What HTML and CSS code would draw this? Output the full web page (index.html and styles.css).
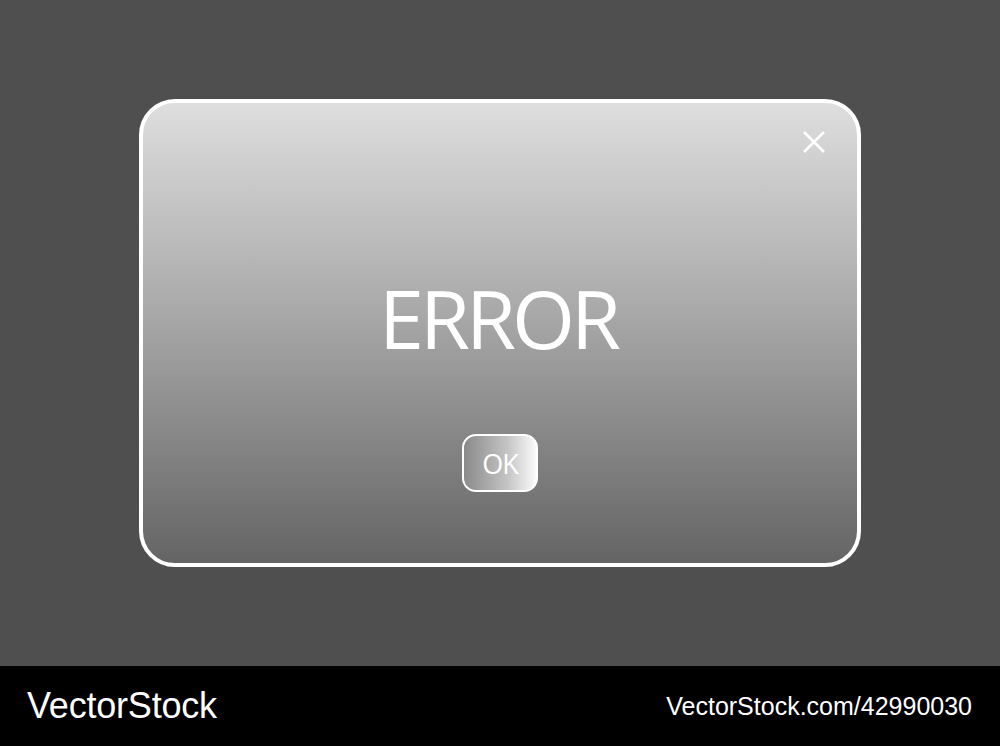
FILE: index.html
```html
<!DOCTYPE html>
<html lang="en">
<head>
    <meta charset="UTF-8">
    <meta name="viewport" content="width=device-width, initial-scale=1.0">
    <title>Error</title>
    <link rel="stylesheet" href="styles.css">
</head>
<body>
    <main class="stage">
        <div class="dialog">
            <button class="close" aria-label="Close">
                <svg width="24" height="24" viewBox="0 0 24 24">
                    <path d="M2 2 L22 22 M22 2 L2 22" stroke="#fff" stroke-width="2.6" fill="none"/>
                </svg>
            </button>
            <h1 class="title">ERROR</h1>
            <button class="ok">OK</button>
        </div>
    </main>

    <footer class="bar">
        <span class="brand">VectorStock</span>
        <span class="ref">VectorStock.com/42990030</span>
    </footer>
</body>
</html>
```

FILE: styles.css
```css
body {
    margin: 0;
    background: #4f4f4f;
}

.stage {
    height: 666px;
    display: flex;
    align-items: center;
    justify-content: center;
}

.dialog {
    position: relative;
    box-sizing: border-box;
    width: 722px;
    height: 468px;
    border: 4px solid #fff;
    border-radius: 36px;
    background: linear-gradient(180deg, #dedede 0%, #a9a9a9 45%, #646464 100%);
    display: flex;
    flex-direction: column;
    align-items: center;
    padding-top: 174px;
}

.close {
    position: absolute;
    top: 27px;
    right: 31px;
    padding: 0;
    border: none;
    background: none;
    cursor: pointer;
    line-height: 0;
}

.title {
    margin: 0;
    font-family: 'Open Sans', sans-serif;
    font-weight: 400;
    font-size: 81px;
    line-height: 82px;
    color: #fff;
    letter-spacing: -4px;
    text-indent: -4px;
}

.ok {
    margin-top: 75px;
    box-sizing: border-box;
    width: 76px;
    height: 58px;
    border: 2px solid #fff;
    border-radius: 14px;
    background: linear-gradient(90deg, #8a8a8a 0%, #c4c4c4 60%, #fafafa 100%);
    color: #fff;
    font-family: 'Open Sans', sans-serif;
    font-size: 27px;
    letter-spacing: -1px;
    padding: 0;
    cursor: pointer;
}

.bar {
    height: 80px;
    background: #000;
    color: #fff;
    font-family: 'Liberation Sans', Arial, sans-serif;
    display: flex;
    align-items: center;
    justify-content: space-between;
    padding: 0 28px 0 27px;
}

.brand {
    font-size: 36px;
    letter-spacing: -0.2px;
}

.ref {
    font-size: 25px;
    letter-spacing: 0;
}
```
